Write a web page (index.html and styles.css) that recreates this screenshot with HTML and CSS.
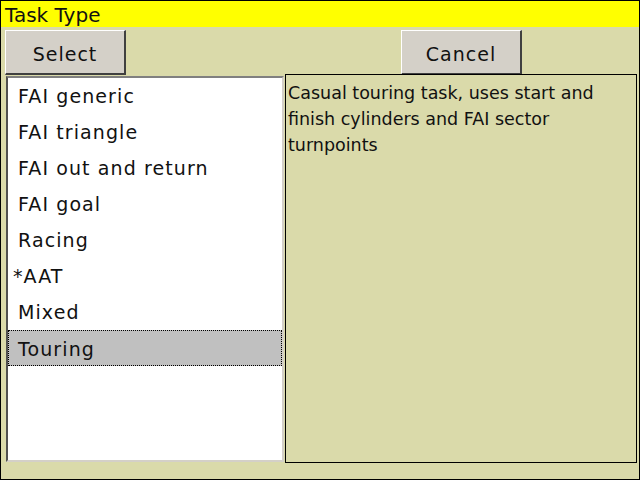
FILE: index.html
```html
<!DOCTYPE html>
<html>
<head>
<meta charset="utf-8">
<link rel="stylesheet" href="styles.css">
</head>
<body>
<div class="dialog">
  <div class="title">Task Type</div>
  <div class="buttons">
    <div class="btn btn-select">Select</div>
    <div class="btn btn-cancel">Cancel</div>
  </div>
  <div class="main">
    <div class="list">
      <div class="item">FAI generic</div>
      <div class="item">FAI triangle</div>
      <div class="item">FAI out and return</div>
      <div class="item">FAI goal</div>
      <div class="item">Racing</div>
      <div class="item"><span class="star">*</span>AAT</div>
      <div class="item">Mixed</div>
      <div class="item selected">Touring</div>
    </div>
    <div class="desc">Casual touring task, uses start and finish cylinders and FAI sector turnpoints</div>
  </div>
</div>
</body>
</html>
```
FILE: styles.css
```css
html, body {
  margin: 0;
  padding: 0;
}
body {
  width: 640px;
  height: 480px;
  overflow: hidden;
  font-family: "DejaVu Sans", sans-serif;
  color: #111;
}
.dialog {
  box-sizing: border-box;
  width: 640px;
  height: 480px;
  border: 1px solid #000;
  background: #dadaaa;
  display: flex;
  flex-direction: column;
}
.title {
  height: 26px;
  background: #ffff00;
  font-size: 20px;
  line-height: 28px;
  padding-left: 4px;
  overflow: hidden;
}
.buttons {
  height: 47px;
  display: flex;
  align-items: flex-start;
}
.btn {
  box-sizing: border-box;
  width: 121px;
  height: 45px;
  margin-top: 3px;
  background: #d4d0c8;
  border-top: 1px solid #fff;
  border-left: 1px solid #fff;
  border-right: 2px solid #404040;
  border-bottom: 2px solid #404040;
  font-size: 19px;
  letter-spacing: 1px;
  text-align: center;
  line-height: 46px;
}
.btn-select {
  margin-left: 4px;
}
.btn-cancel {
  margin-left: 275px;
}
.main {
  display: flex;
  align-items: flex-start;
}
.list {
  box-sizing: border-box;
  width: 278px;
  height: 386px;
  margin-top: 2px;
  margin-left: 5px;
  background: #fff;
  border-top: 2px solid #808080;
  border-left: 2px solid #505050;
  border-right: 2px solid #d4d0c8;
  border-bottom: 2px solid #d4d0c8;
}
.item {
  box-sizing: border-box;
  height: 36px;
  line-height: 37px;
  padding-left: 10px;
  font-size: 19px;
  letter-spacing: 1.1px;
}
.star {
  margin-left: -5px;
}
.item.selected {
  background: #c0c0c0;
  border: 1px dotted #000;
  line-height: 36px;
  padding-left: 9px;
}
.desc {
  box-sizing: border-box;
  width: 352px;
  height: 389px;
  margin-left: 1px;
  border: 1px solid #000;
  padding: 5px 2px 0 2px;
  font-size: 17.5px;
  line-height: 26px;
}
```
